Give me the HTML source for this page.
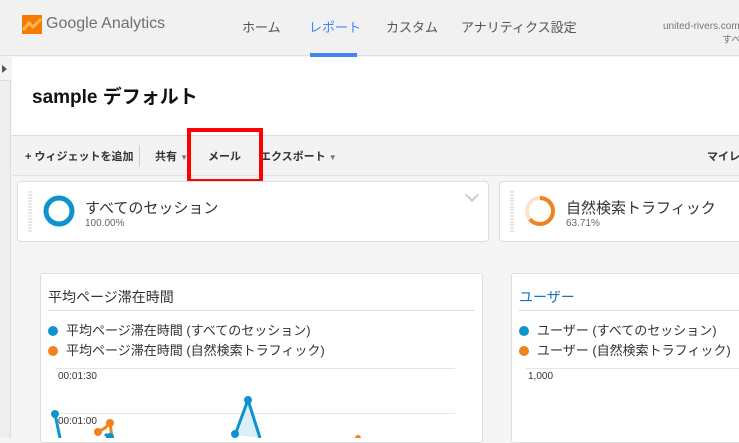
<!DOCTYPE html><html><head><meta charset="utf-8"><style>
*{margin:0;padding:0;box-sizing:border-box}
body{width:739px;height:438px;overflow:hidden;background:#f5f5f5;font-family:"Liberation Sans","Noto Sans CJK JP",sans-serif;position:relative}
.a{position:absolute;white-space:nowrap}
.d{display:inline-block;width:10px;height:10px;border-radius:50%;margin-right:8px;vertical-align:-1px}
</style></head><body>
<div class="a" style="left:0;top:0;width:739px;height:56px;background:#f1f1f1;border-bottom:1px solid #e0e0e0"></div>
<svg class="a" style="left:22px;top:15px" width="20" height="19"><rect width="20" height="19" fill="#f57c00"/><path d="M1 15 L7 8 L11 12 L19 4" stroke="#ffb74d" stroke-width="3" fill="none"/></svg>
<div class="a" style="left:46px;top:15px;font-size:16px;color:#707070">Google Analytics</div>
<div class="a" style="left:242px;top:17px;font-size:13px;color:#555">ホーム</div>
<div class="a" style="left:309px;top:17px;font-size:13px;color:#4285f4">レポート</div>
<div class="a" style="left:310px;top:53px;width:47px;height:4px;background:#4285f4"></div>
<div class="a" style="left:386px;top:17px;font-size:13px;color:#555">カスタム</div>
<div class="a" style="left:461px;top:17px;font-size:13px;color:#555">アナリティクス設定</div>
<div class="a" style="left:663px;top:21px;font-size:10px;color:#777">united-rivers.com</div>
<div class="a" style="left:722px;top:31px;font-size:10px;color:#777">すべ</div>
<div class="a" style="left:0;top:57px;width:11px;height:381px;background:#eee;border-right:1px solid #ddd"></div>
<div class="a" style="left:0;top:57px;width:11px;height:24px;background:#f3f3f3;border-bottom:1px solid #ddd"></div>
<div class="a" style="left:2px;top:65px;width:0;height:0;border-left:5px solid #555;border-top:4px solid transparent;border-bottom:4px solid transparent"></div>
<div class="a" style="left:12px;top:57px;width:727px;height:79px;background:#fff;border-bottom:1px solid #ddd"></div>
<div class="a" style="left:32px;top:82px;font-size:19px;font-weight:bold;color:#111">sample デフォルト</div>
<div class="a" style="left:12px;top:136px;width:727px;height:40px;background:#f3f3f3;border-bottom:1px solid #e3e3e3"></div>
<div class="a" style="left:25px;top:148px;font-size:11px;font-weight:bold;color:#333">+ ウィジェットを追加</div>
<div class="a" style="left:139px;top:145px;width:1px;height:22px;background:#ccc"></div>
<div class="a" style="left:155px;top:148px;font-size:11px;font-weight:bold;color:#333">共有 <span style="font-size:8px;color:#777">▼</span></div>
<div class="a" style="left:208px;top:148px;font-size:11px;font-weight:bold;color:#333">メール</div>
<div class="a" style="left:260px;top:148px;font-size:11px;font-weight:bold;color:#333">エクスポート <span style="font-size:8px;color:#777">▼</span></div>
<div class="a" style="left:707px;top:148px;font-size:11px;font-weight:bold;color:#333">マイレ</div>
<div class="a" style="left:187px;top:128px;width:76px;height:55px;border:4px solid #f00"></div>
<div class="a" style="left:17px;top:181px;width:472px;height:61px;background:#fff;border:1px solid #ddd;border-radius:4px"></div>
<div class="a" style="left:28px;top:191px;width:4px;height:42px;background:repeating-linear-gradient(#e6e6e6 0 2px,#fff 2px 3px)"></div>
<svg class="a" style="left:43px;top:195px" width="32" height="32"><circle cx="16" cy="16" r="13" stroke="#0e93cf" stroke-width="5" fill="none"/></svg>
<div class="a" style="left:85px;top:197px;font-size:15px;color:#333">すべてのセッション</div>
<div class="a" style="left:85px;top:218px;font-size:10px;color:#666">100.00%</div>
<div class="a" style="left:467px;top:190px;width:10px;height:10px;border-right:2px solid #ccc;border-bottom:2px solid #ccc;transform:rotate(45deg)"></div>
<div class="a" style="left:499px;top:181px;width:250px;height:61px;background:#fff;border:1px solid #ddd;border-radius:4px"></div>
<div class="a" style="left:510px;top:191px;width:4px;height:42px;background:repeating-linear-gradient(#e6e6e6 0 2px,#fff 2px 3px)"></div>
<svg class="a" style="left:524px;top:195px" width="32" height="32"><circle cx="16" cy="16" r="13" stroke="#fbe3d1" stroke-width="4" fill="none"/><circle cx="16" cy="16" r="13" stroke="#f08220" stroke-width="4" fill="none" stroke-dasharray="52 82" transform="rotate(-90 16 16)"/></svg>
<div class="a" style="left:566px;top:197px;font-size:15px;color:#333">自然検索トラフィック</div>
<div class="a" style="left:566px;top:218px;font-size:10px;color:#666">63.71%</div>
<div class="a" style="left:40px;top:273px;width:443px;height:170px;background:#fff;border:1px solid #ddd;border-radius:3px"></div>
<div class="a" style="left:48px;top:287px;font-size:14px;color:#333">平均ページ滞在時間</div>
<div class="a" style="left:48px;top:310px;width:427px;height:1px;background:#ddd"></div>
<div class="a" style="left:48px;top:320px;font-size:13px;color:#333"><span class="d" style="background:#0e93cf"></span>平均ページ滞在時間 (すべてのセッション)</div>
<div class="a" style="left:48px;top:340px;font-size:13px;color:#333"><span class="d" style="background:#f08220"></span>平均ページ滞在時間 (自然検索トラフィック)</div>
<div class="a" style="left:55px;top:368px;width:400px;height:1px;background:#e5e5e5"></div>
<div class="a" style="left:55px;top:413px;width:400px;height:1px;background:#e5e5e5"></div>
<div class="a" style="left:58px;top:371px;font-size:10px;color:#333">00:01:30</div>
<div class="a" style="left:58px;top:416px;font-size:10px;color:#333">00:01:00</div>
<svg class="a" style="left:40px;top:390px" width="400" height="48"><path d="M15 24 L20 48 M65 44 L70 48 M195 45 L208 10 L220 48" stroke="#0e93cf" stroke-width="3" fill="#dceef8"/><path d="M58 42 L65 38 L70 33 L72 48" stroke="#f08220" stroke-width="3" fill="none"/><circle cx="15" cy="24" r="4" fill="#0e93cf"/><circle cx="208" cy="10" r="4" fill="#0e93cf"/><circle cx="195" cy="44" r="4" fill="#0e93cf"/><circle cx="70" cy="47" r="4" fill="#0e93cf"/><circle cx="58" cy="42" r="4" fill="#f08220"/><circle cx="70" cy="33" r="4" fill="#f08220"/><circle cx="318" cy="48" r="3" fill="#f08220"/></svg>
<div class="a" style="left:511px;top:273px;width:240px;height:170px;background:#fff;border:1px solid #ddd;border-radius:3px"></div>
<div class="a" style="left:519px;top:287px;font-size:14px;color:#1a73b8">ユーザー</div>
<div class="a" style="left:519px;top:310px;width:230px;height:1px;background:#ddd"></div>
<div class="a" style="left:519px;top:320px;font-size:13px;color:#333"><span class="d" style="background:#0e93cf"></span>ユーザー (すべてのセッション)</div>
<div class="a" style="left:519px;top:340px;font-size:13px;color:#333"><span class="d" style="background:#f08220"></span>ユーザー (自然検索トラフィック)</div>
<div class="a" style="left:526px;top:368px;width:220px;height:1px;background:#e5e5e5"></div>
<div class="a" style="left:528px;top:371px;font-size:10px;color:#333">1,000</div>
</body></html>
